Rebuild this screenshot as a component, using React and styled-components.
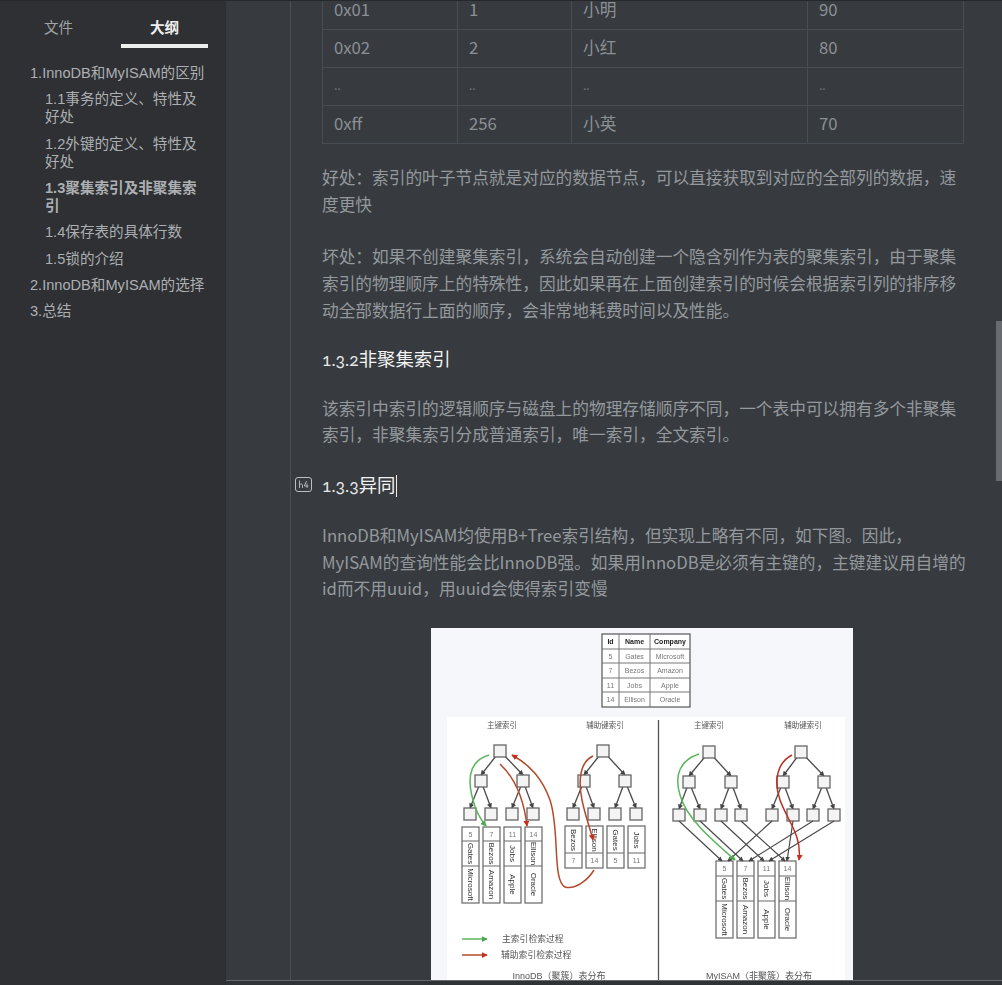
import styled, { createGlobalStyle } from 'styled-components'

const GlobalStyle = createGlobalStyle`
  html, body {
    margin: 0;
    padding: 0;
    height: 100%;
    overflow: hidden;
    background: #373b3f;
  }
`

const fontStack = `"Liberation Sans", "Noto Sans CJK SC", sans-serif`
const docFont = `"Noto Sans CJK SC", "Liberation Sans", sans-serif`

const Window = styled.div`
  display: flex;
  width: 1002px;
  height: 985px;
  overflow: hidden;
  border-top: 1px solid #26282b;
  box-sizing: border-box;
  font-family: ${fontStack};
`

const Sidebar = styled.aside`
  width: 226px;
  flex: none;
  background: #2e3033;
`

const Tabs = styled.div`
  display: flex;
  height: 47px;
  padding: 0 18px 0 8px;
`

const Tab = styled.div`
  width: ${({ $active }) => ($active ? '87px' : '113px')};
  box-sizing: border-box;
  display: flex;
  align-items: center;
  justify-content: center;
  font-size: 14.6px;
  padding: ${({ $active }) => ($active ? '7px 0 0' : '7px 12px 0 0')};
  font-weight: ${({ $active }) => ($active ? 700 : 400)};
  color: ${({ $active }) => ($active ? '#eeeeee' : '#a0a3a6')};
  border-bottom: 4px solid ${({ $active }) => ($active ? '#eeeeee' : 'transparent')};
`

const Outline = styled.ul`
  list-style: none;
  margin: 12px 0 0;
  padding: 0;
`

const OutlineItem = styled.li`
  font-size: 14.6px;
  line-height: 18.2px;
  padding: 4px 0;
  margin-left: ${({ $level }) => ($level === 2 ? '45px' : '30px')};
  width: ${({ $level }) => ($level === 2 ? '160px' : '180px')};
  color: #acafb2;
  font-weight: ${({ $active }) => ($active ? 700 : 400)};
`

const Gutter = styled.div`
  width: 65px;
  flex: none;
  background: #373b3f;
  border-right: 1px solid #4a5058;
  box-sizing: border-box;
`

const Editor = styled.main`
  flex: 1;
  position: relative;
  min-width: 0;
  background: #373b3f;
  padding-left: 31px;
  overflow: hidden;
`

const Doc = styled.div`
  width: 646px;
  margin-top: -10px;
  font-family: ${docFont};
`

const DataTable = styled.table`
  width: 642px;
  table-layout: fixed;
  border-collapse: collapse;
  font-size: 16.7px;
  color: #8b9095;
`

const Cell = styled.td`
  height: 38px;
  box-sizing: border-box;
  padding: 0 0 4px 11px;
  border: 1px solid #474d54;
  font-size: ${({ $dots }) => ($dots ? '12px' : 'inherit')};
  color: ${({ $dots }) => ($dots ? '#70757a' : 'inherit')};
`

const Para = styled.p`
  margin: ${({ $mt }) => $mt}px 0 0;
  font-size: 16.7px;
  line-height: 26.7px;
  color: #94999d;
`

const Heading = styled.h4`
  position: relative;
  margin: ${({ $mt }) => $mt}px 0 0;
  font-size: 18.4px;
  line-height: 26px;
  font-weight: 400;
  color: #f2f2f2;
`

const OldNum = styled.span`
  font-family: "Lato", "Open Sans", serif;
  font-size: 17.5px;
  color: #e6e6e6;
  font-variant-numeric: oldstyle-nums;
`

const HeadingMark = styled.svg`
  position: absolute;
  left: -27px;
  top: 6px;
`

const Caret = styled.span`
  display: inline-block;
  width: 1px;
  height: 22px;
  margin-left: 1px;
  vertical-align: -5px;
  background: #eeeeee;
`

const Figure = styled.svg`
  display: block;
  margin: 26px 0 0 109px;
  filter: blur(0.5px);
`

const ScrollThumb = styled.div`
  position: absolute;
  right: 0;
  top: 320px;
  width: 6px;
  height: 160px;
  background: #686c6f;
`

const StatusLine = styled.div`
  position: absolute;
  left: 226px;
  right: 0;
  top: 980px;
  height: 5px;
  box-sizing: border-box;
  background: #303336;
  border-top: 1px solid #666a6c;
`

const outline = [
  { text: '1.InnoDB和MyISAM的区别', level: 1 },
  { text: '1.1事务的定义、特性及好处', level: 2 },
  { text: '1.2外键的定义、特性及好处', level: 2 },
  { text: '1.3聚集索引及非聚集索引', level: 2, active: true },
  { text: '1.4保存表的具体行数', level: 2 },
  { text: '1.5锁的介绍', level: 2 },
  { text: '2.InnoDB和MyISAM的选择', level: 1 },
  { text: '3.总结', level: 1 },
]

const rows = [
  ['0x01', '1', '小明', '90'],
  ['0x02', '2', '小红', '80'],
  ['..', '..', '..', '..'],
  ['0xff', '256', '小英', '70'],
]

const NODE = '#666'
const sq = ([x, y], i) => (
  <rect key={i} x={x - 6} y={y - 6} width="12" height="12" fill="#f4f4f4" stroke={NODE} strokeWidth="1.3" />
)

const trees = [
  { root: [500, 751], l2: [[481, 781], [523, 781]], l3: [[470, 814], [491, 814], [512, 814], [533, 814]] },
  { root: [603, 751], l2: [[584, 781], [625, 781]], l3: [[573, 814], [594, 814], [615, 814], [636, 814]] },
  { root: [709, 752], l2: [[689, 782], [731, 782]], l3: [[679, 815], [700, 815], [721, 815], [741, 815]] },
  { root: [801, 752], l2: [[783, 782], [824, 782]], l3: [[772, 815], [793, 815], [813, 815], [834, 815]] },
]

const Tree = ({ root, l2, l3 }) => (
  <g>
    {l2.map((n, i) => (
      <line key={i} x1={root[0]} y1={root[1]} x2={n[0]} y2={n[1] - 6} stroke="#4a4a4a" strokeWidth="1.3" markerEnd="url(#arrowGrey)" />
    ))}
    {l3.map((n, i) => {
      const p = l2[i < 2 ? 0 : 1]
      return <line key={i} x1={p[0]} y1={p[1]} x2={n[0]} y2={n[1] - 6} stroke="#4a4a4a" strokeWidth="1.3" markerEnd="url(#arrowGrey)" />
    })}
    {sq(root, 'r')}
    {l2.map((n, i) => sq(n, 'a' + i))}
    {l3.map((n, i) => sq(n, 'b' + i))}
  </g>
)

const VText = ({ x, y, children }) => (
  <text x={x} y={y} fontSize="8" fill="#333" textAnchor="middle" transform={`rotate(90 ${x} ${y})`} dominantBaseline="middle">
    {children}
  </text>
)

// record column: id on top, then name and company turned 90 degrees
const RecordV = ({ x, id, name, company, ys }) => (
  <g>
    <rect x={x} y={ys[0]} width="17" height={ys[3] - ys[0]} fill="#fff" stroke={NODE} strokeWidth="1.2" />
    <line x1={x} x2={x + 17} y1={ys[1]} y2={ys[1]} stroke={NODE} />
    <line x1={x} x2={x + 17} y1={ys[2]} y2={ys[2]} stroke={NODE} />
    <text x={x + 8.5} y={(ys[0] + ys[1]) / 2 + 2.5} fontSize="7" fill="#777" textAnchor="middle">{id}</text>
    <VText x={x + 8.5} y={(ys[1] + ys[2]) / 2}>{name}</VText>
    <VText x={x + 8.5} y={(ys[2] + ys[3]) / 2}>{company}</VText>
  </g>
)

// secondary index column: name turned on top, id below
const RecordS = ({ x, id, name }) => (
  <g>
    <rect x={x} y="826" width="17" height="42" fill="#fff" stroke={NODE} strokeWidth="1.2" />
    <line x1={x} x2={x + 17} y1="853" y2="853" stroke={NODE} />
    <VText x={x + 8.5} y="840">{name}</VText>
    <text x={x + 8.5} y="863" fontSize="7" fill="#777" textAnchor="middle">{id}</text>
  </g>
)

const people = [
  ['5', 'Gates', 'Microsoft'],
  ['7', 'Bezos', 'Amazon'],
  ['11', 'Jobs', 'Apple'],
  ['14', 'Ellison', 'Oracle'],
]

const crossLinks = [
  [679, 821, 722, 861], [700, 821, 743, 861], [721, 821, 764, 861], [741, 821, 785, 861],
  [772, 821, 728, 861], [793, 821, 787, 861], [813, 821, 749, 861], [834, 821, 769, 861],
]

const IndexDiagram = () => (
  <Figure width="422" height="352" viewBox="431 628 422 352">
    <defs>
      <marker id="arrowGrey" markerWidth="4" markerHeight="4" refX="3.5" refY="2" orient="auto">
        <path d="M0 0 L4 2 L0 4 Z" fill="#444" />
      </marker>
      <marker id="arrowGreen" markerWidth="4" markerHeight="4" refX="3.5" refY="2" orient="auto">
        <path d="M0 0 L4 2 L0 4 Z" fill="#4aa84f" />
      </marker>
      <marker id="arrowRed" markerWidth="4" markerHeight="4" refX="3.5" refY="2" orient="auto">
        <path d="M0 0 L4 2 L0 4 Z" fill="#c8301e" />
      </marker>
    </defs>
    <rect x="431" y="628" width="422" height="352" fill="#f5f7fa" />
    <rect x="447" y="717" width="398" height="263" fill="#ffffff" />
    <line x1="658.5" y1="720" x2="658.5" y2="980" stroke="#555" strokeWidth="1.3" />

    <g fontFamily={fontStack}>
      <rect x="602" y="634" width="88" height="73" fill="#fff" stroke="#555" strokeWidth="1.2" />
      {[649, 663, 678, 692].map((y) => (
        <line key={y} x1="602" x2="690" y1={y} y2={y} stroke="#777" />
      ))}
      <line x1="619" x2="619" y1="634" y2="707" stroke="#777" />
      <line x1="650" x2="650" y1="634" y2="707" stroke="#777" />
      {[
        ['Id', 'Name', 'Company'],
        ['5', 'Gates', 'Microsoft'],
        ['7', 'Bezos', 'Amazon'],
        ['11', 'Jobs', 'Apple'],
        ['14', 'Ellison', 'Oracle'],
      ].map((r, i) => (
        <g key={i} fontSize="7" fontWeight={i === 0 ? 700 : 400} fill={i === 0 ? '#222' : '#777'} textAnchor="middle">
          <text x="610.5" y={644 + i * 14.5}>{r[0]}</text>
          <text x="634.5" y={644 + i * 14.5}>{r[1]}</text>
          <text x="670" y={644 + i * 14.5}>{r[2]}</text>
        </g>
      ))}

      <g fontSize="7.5" fill="#555" textAnchor="middle">
        <text x="502" y="728">主键索引</text>
        <text x="605" y="728">辅助键索引</text>
        <text x="709" y="728">主键索引</text>
        <text x="803" y="728">辅助键索引</text>
      </g>

      {trees.map((t, i) => <Tree key={i} {...t} />)}

      {people.map(([id, name, company], i) => (
        <RecordV key={id} x={462 + i * 21} id={id} name={name} company={company} ys={[827, 841, 866, 903]} />
      ))}
      {[['Bezos', '7'], ['Ellison', '14'], ['Gates', '5'], ['Jobs', '11']].map(([name, id], i) => (
        <RecordS key={id} x={565 + i * 21} id={id} name={name} />
      ))}
      {people.map(([id, name, company], i) => (
        <RecordV key={id} x={716 + i * 21} id={id} name={name} company={company} ys={[861, 876, 901, 938]} />
      ))}

      {crossLinks.map(([a, b, c, d], i) => (
        <line key={i} x1={a} y1={b} x2={c} y2={d} stroke="#4a4a4a" strokeWidth="1.2" markerEnd="url(#arrowGrey)" />
      ))}

      <g fill="none" strokeWidth="1.5">
        <path d="M489 755 C472 760 466 775 473 800 C476 812 481 820 486 826" stroke="#5db65f" markerEnd="url(#arrowGreen)" />
        <path d="M699 754 C680 760 674 775 680 795 C686 818 712 840 735 860" stroke="#5db65f" markerEnd="url(#arrowGreen)" />
        <path d="M500 764 C515 778 524 800 527 826" stroke="#b4492c" markerEnd="url(#arrowRed)" />
        <path d="M594 870 C588 880 575 890 565 887 C552 880 560 830 550 800 C542 778 530 765 512 755" stroke="#b4492c" markerEnd="url(#arrowRed)" />
        <path d="M593 756 C580 762 578 780 582 800 C585 815 590 828 593 840" stroke="#b4492c" markerEnd="url(#arrowRed)" />
        <path d="M792 755 C778 762 773 780 780 800 C788 822 802 835 799 860" stroke="#b8301e" markerEnd="url(#arrowRed)" />
      </g>

      <line x1="462" x2="487" y1="939" y2="939" stroke="#5db65f" strokeWidth="1.5" markerEnd="url(#arrowGreen)" />
      <line x1="462" x2="487" y1="955" y2="955" stroke="#b4492c" strokeWidth="1.5" markerEnd="url(#arrowRed)" />
      <g fontSize="8.8" fill="#555">
        <text x="502" y="942">主索引检索过程</text>
        <text x="501" y="958">辅助索引检索过程</text>
      </g>
      <g fontSize="9" fill="#555" textAnchor="middle">
        <text x="559" y="979">InnoDB（聚簇）表分布</text>
        <text x="759" y="979">MyISAM（非聚簇）表分布</text>
      </g>
    </g>
  </Figure>
)

const App = () => (
  <>
    <GlobalStyle />
    <Window>
      <Sidebar>
        <Tabs>
          <Tab>文件</Tab>
          <Tab $active>大纲</Tab>
        </Tabs>
        <Outline>
          {outline.map((item) => (
            <OutlineItem key={item.text} $level={item.level} $active={item.active}>{item.text}</OutlineItem>
          ))}
        </Outline>
      </Sidebar>
      <Gutter />
      <Editor>
        <Doc>
          <DataTable>
            <colgroup>
              <col style={{ width: 135 }} />
              <col style={{ width: 114 }} />
              <col style={{ width: 236 }} />
              <col />
            </colgroup>
            <tbody>
              {rows.map((row, r) => (
                <tr key={r}>
                  {row.map((v, c) => <Cell key={c} $dots={v === '..'}>{v}</Cell>)}
                </tr>
              ))}
            </tbody>
          </DataTable>
          <Para $mt={20}>好处：索引的叶子节点就是对应的数据节点，可以直接获取到对应的全部列的数据，速度更快</Para>
          <Para $mt={26}>坏处：如果不创建聚集索引，系统会自动创建一个隐含列作为表的聚集索引，由于聚集索引的物理顺序上的特殊性，因此如果再在上面创建索引的时候会根据索引列的排序移动全部数据行上面的顺序，会非常地耗费时间以及性能。</Para>
          <Heading $mt={21}><OldNum>1.3.2</OldNum>非聚集索引</Heading>
          <Para $mt={22}>该索引中索引的逻辑顺序与磁盘上的物理存储顺序不同，一个表中可以拥有多个非聚集索引，非聚集索引分成普通索引，唯一索引，全文索引。</Para>
          <Heading $mt={23}>
            <HeadingMark width="17" height="15" viewBox="0 0 17 15">
              <rect x="0.5" y="0.5" width="16" height="14" rx="2.5" fill="none" stroke="#bdbfc1" />
              <path d="M4.5 3.5V11M4.5 8C5.5 6.5 7.5 6.5 7.5 8.2V11M11.5 4L9.3 9H13.5M12 6.5V11" fill="none" stroke="#bdbfc1" strokeWidth="0.9" />
            </HeadingMark>
            <OldNum>1.3.3</OldNum>异同<Caret />
          </Heading>
          <Para $mt={23}>InnoDB和MyISAM均使用B+Tree索引结构，但实现上略有不同，如下图。因此，MyISAM的查询性能会比InnoDB强。如果用InnoDB是必须有主键的，主键建议用自增的id而不用uuid，用uuid会使得索引变慢</Para>
          <IndexDiagram />
        </Doc>
        <ScrollThumb />
      </Editor>
      <StatusLine />
    </Window>
  </>
)

export default App
